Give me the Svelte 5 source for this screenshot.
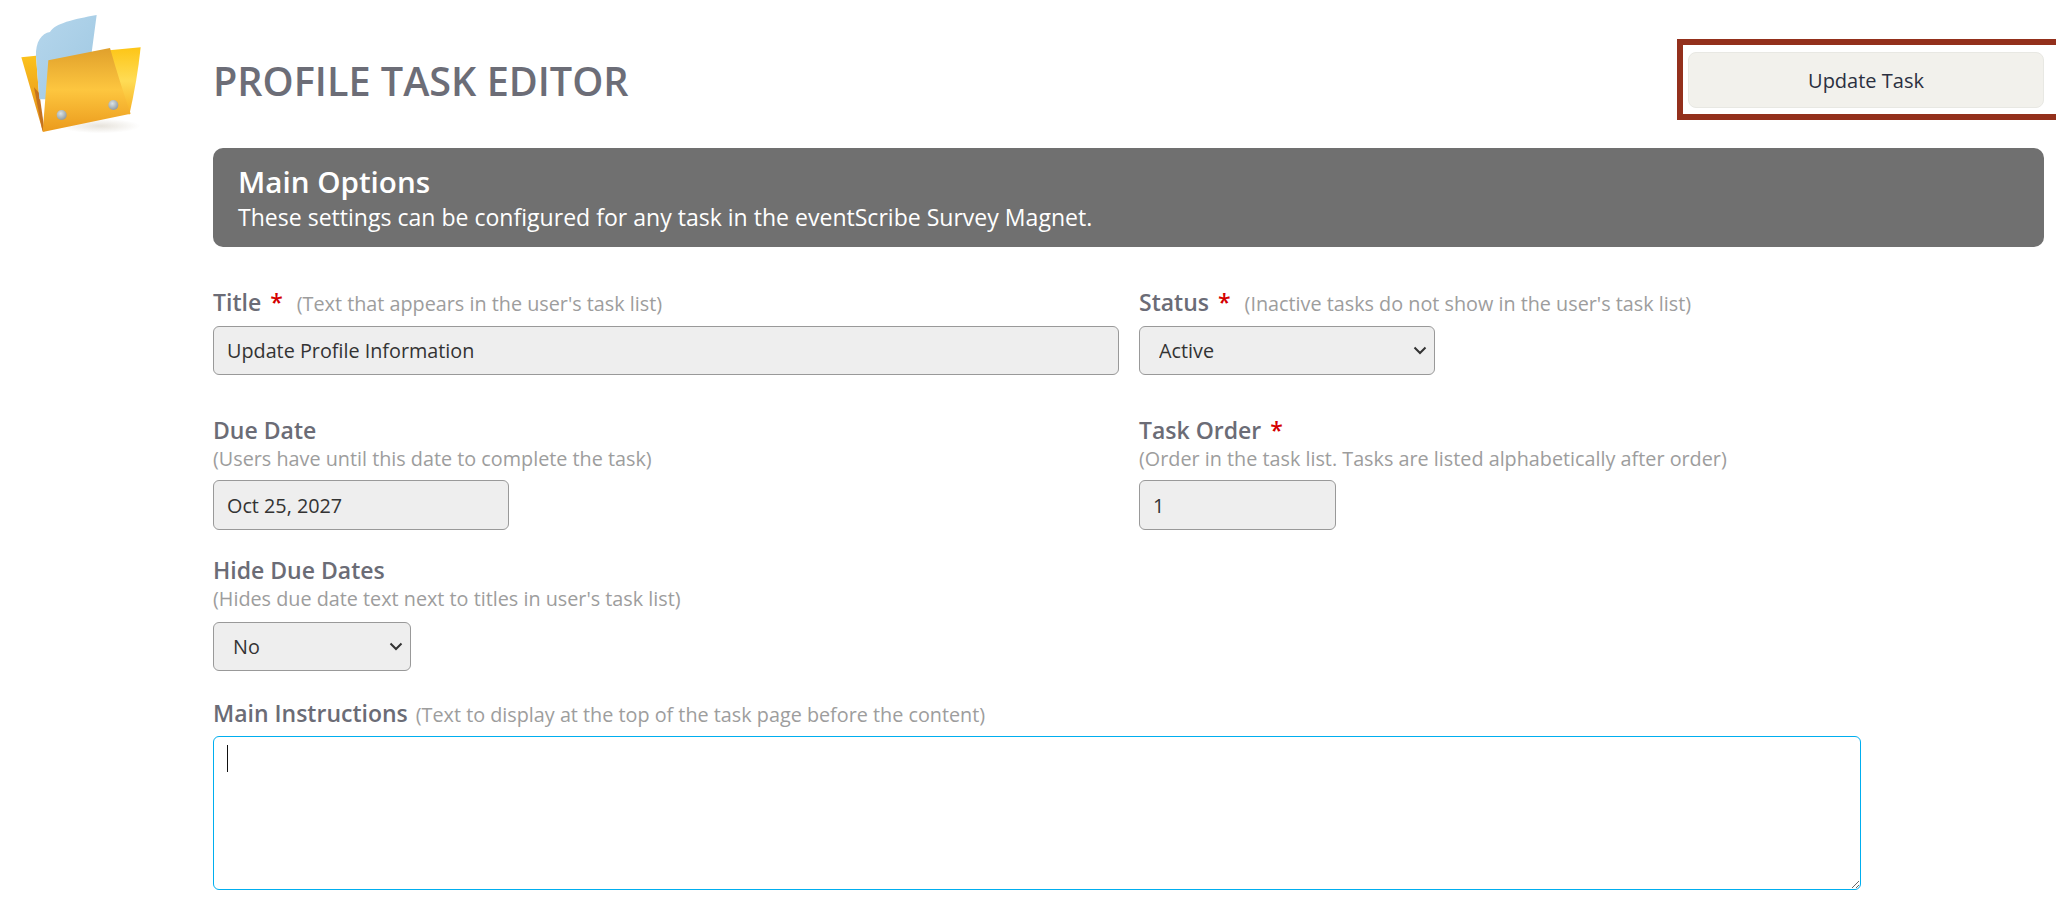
<script>
  let title = 'Update Profile Information';
  let dueDate = 'Oct 25, 2027';
  let taskOrder = '1';
</script>

<div class="page">
  <div class="logo">
    <svg width="160" height="150" viewBox="0 0 480 450" aria-hidden="true">
      <defs>
        <linearGradient id="paper" x1="0" y1="0" x2="1" y2="1">
          <stop offset="0" stop-color="#b5d6ec" />
          <stop offset="1" stop-color="#9fc8e2" />
        </linearGradient>
        <linearGradient id="front" x1="0" y1="0" x2="0" y2="1">
          <stop offset="0" stop-color="#e0a02c" />
          <stop offset="0.5" stop-color="#fdc63f" />
          <stop offset="1" stop-color="#eb9a1c" />
        </linearGradient>
        <linearGradient id="flap" x1="0" y1="0" x2="0" y2="1">
          <stop offset="0" stop-color="#fdc516" />
          <stop offset="0.5" stop-color="#ffdc55" />
          <stop offset="1" stop-color="#f6ad22" />
        </linearGradient>
        <linearGradient id="back" x1="0" y1="0" x2="0" y2="1">
          <stop offset="0" stop-color="#fcc21c" />
          <stop offset="1" stop-color="#e08a1e" />
        </linearGradient>
        <radialGradient id="shade">
          <stop offset="0" stop-color="#a89a80" stop-opacity="0.28" />
          <stop offset="1" stop-color="#a89a80" stop-opacity="0" />
        </radialGradient>
        <radialGradient id="rivet" cx="0.4" cy="0.35" r="0.7">
          <stop offset="0" stop-color="#dbe3e5" />
          <stop offset="1" stop-color="#8d979c" />
        </radialGradient>
      </defs>
      <ellipse cx="300" cy="378" rx="120" ry="22" fill="url(#shade)" />
      <path d="M64 172 L108 167 L118 298 L128 392 Z" fill="url(#back)" />
      <path d="M102 262 L118 280 L134 394 L127 392 Z" fill="#c4721f" />
      <path d="M280 155 L422 142 Q412 240 388 344 L340 300 Z" fill="url(#flap)" />
      <path d="M108 170 C106 125 125 100 150 96 C165 70 220 58 290 45 L274 165 L150 200 L142 298 L118 298 Z" fill="url(#paper)" />
      <path d="M145 181 L330 144 Q360 250 392 341 L128 396 Z" fill="url(#front)" />
      <circle cx="185" cy="345" r="15" fill="url(#rivet)" />
      <circle cx="340" cy="315" r="15" fill="url(#rivet)" />
    </svg>
  </div>

  <main class="content">
    <header class="top">
      <h1>PROFILE TASK EDITOR</h1>
      <div class="callout">
        <button type="button" class="update">Update Task</button>
      </div>
    </header>

    <section class="banner">
      <h2>Main Options</h2>
      <p>These settings can be configured for any task in the eventScribe Survey Magnet.</p>
    </section>

    <div class="form">
      <div class="field">
        <div class="label">Title <span class="req">*</span> <span class="hint inline">(Text that appears in the user's task list)</span></div>
        <input class="title-input" type="text" bind:value={title} />
      </div>
      <div class="field">
        <div class="label">Status <span class="req">*</span> <span class="hint inline">(Inactive tasks do not show in the user's task list)</span></div>
        <select class="status">
          <option>Active</option>
          <option>Inactive</option>
        </select>
      </div>

      <div class="field second">
        <div class="label">Due Date</div>
        <div class="hint">(Users have until this date to complete the task)</div>
        <input class="date" type="text" bind:value={dueDate} />
      </div>
      <div class="field second">
        <div class="label">Task Order <span class="req">*</span></div>
        <div class="hint">(Order in the task list. Tasks are listed alphabetically after order)</div>
        <input class="order" type="text" bind:value={taskOrder} />
      </div>

      <div class="field third wide">
        <div class="label">Hide Due Dates</div>
        <div class="hint">(Hides due date text next to titles in user's task list)</div>
        <select class="hide">
          <option>No</option>
          <option>Yes</option>
        </select>
      </div>

      <div class="field fourth wide">
        <div class="label">Main Instructions <span class="hint inline tight">(Text to display at the top of the task page before the content)</span></div>
        <div class="editor">
          <textarea></textarea>
          <span class="caret"></span>
        </div>
      </div>
    </div>
  </main>
</div>

<style>
  :global(body) {
    margin: 0;
    background: #fff;
    overflow: hidden;
  }

  .page {
    display: flex;
    font-family: "Open Sans", "Noto Sans", sans-serif;
    height: 918px;
    overflow: hidden;
  }

  .logo {
    width: 213px;
    flex: none;
  }

  .logo svg {
    display: block;
    filter: blur(0.5px);
  }

  .content {
    flex: 1;
    min-width: 0;
    padding: 39px 0 0 0;
  }

  .top {
    display: flex;
    justify-content: space-between;
    align-items: center;
    height: 81px;
  }

  h1 {
    margin: 2px 0 0;
    font-size: 39.6px;
    font-weight: 600;
    color: #6c6d77;
  }

  .callout {
    box-sizing: border-box;
    width: 379px;
    height: 81px;
    border: 6px solid #93301c;
    border-right: 0;
    padding: 7px 12px 6px 5px;
  }

  .update {
    display: block;
    width: 100%;
    height: 56px;
    box-sizing: border-box;
    background: #f2f1ec;
    border: 1px solid #e8e8e3;
    border-radius: 8px;
    font-family: inherit;
    font-size: 20px;
    color: #2b3040;
  }

  .banner {
    box-sizing: border-box;
    margin: 28px 12px 0 0;
    height: 99px;
    padding: 15px 25px 0;
    background: #707070;
    border-radius: 10px;
    color: #fff;
  }

  h2 {
    margin: 0;
    font-size: 29.6px;
    line-height: 38px;
    font-weight: 600;
  }

  .banner p {
    margin: 0;
    font-size: 23.05px;
    line-height: 32px;
  }

  .form {
    display: grid;
    grid-template-columns: 926px 1fr;
    margin-top: 40px;
  }

  .field {
    min-width: 0;
  }

  .second {
    margin-top: 40px;
  }

  .third {
    margin-top: 25px;
  }

  .fourth {
    margin-top: 27px;
  }

  .wide {
    grid-column: 1 / -1;
  }

  .label {
    font-size: 23px;
    line-height: 30px;
    font-weight: 600;
    color: #6b6c76;
    white-space: nowrap;
  }

  .req {
    color: #d40000;
    margin: 0 8px 0 3px;
  }

  .hint {
    font-size: 19.8px;
    line-height: 28px;
    font-weight: 400;
    color: #9d9d9d;
    white-space: nowrap;
  }

  .hint.inline {
    line-height: 30px;
  }

  .hint.tight {
    margin-left: 2px;
  }

  input,
  select {
    display: block;
    box-sizing: border-box;
    background-color: #eee;
    border: 1px solid #999;
    border-radius: 6px;
    font-family: inherit;
    font-size: 19.8px;
    color: #333;
    margin-top: 7px;
  }

  input {
    padding: 0 13px;
  }

  select {
    appearance: none;
    padding: 0 19px;
    background-image: url("data:image/svg+xml,%3Csvg xmlns='http://www.w3.org/2000/svg' width='14' height='9' viewBox='0 0 14 9'%3E%3Cpath d='M1.5 1.5 7 7l5.5-5.5' fill='none' stroke='%23333' stroke-width='2'/%3E%3C/svg%3E");
    background-repeat: no-repeat;
    background-position: right 7px center;
  }

  .title-input {
    width: 906px;
    height: 49px;
  }

  .status {
    width: 296px;
    height: 49px;
  }

  .date {
    width: 296px;
    height: 50px;
  }

  .order {
    width: 197px;
    height: 50px;
  }

  .hide {
    width: 198px;
    height: 49px;
    margin-top: 9px;
  }

  .editor {
    position: relative;
    width: 1648px;
    margin-top: 6px;
  }

  textarea {
    display: block;
    box-sizing: border-box;
    width: 100%;
    height: 154px;
    background: #fff;
    border: 1px solid #00aeef;
    border-radius: 6px;
    outline: none;
    margin: 0;
  }

  .caret {
    position: absolute;
    left: 14px;
    top: 9px;
    width: 1px;
    height: 27px;
    background: #111;
  }
</style>
